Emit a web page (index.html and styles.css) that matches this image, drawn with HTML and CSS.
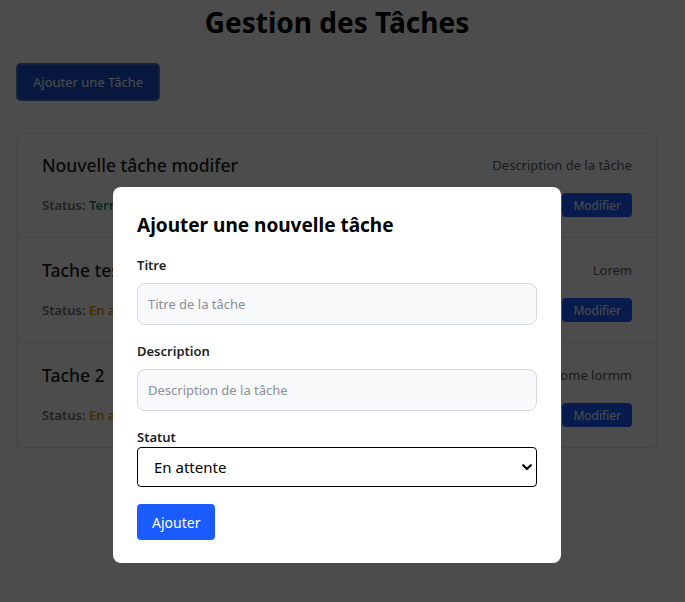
FILE: index.html
```html
<!DOCTYPE html>
<html lang="fr">
<head>
<meta charset="utf-8">
<title>Gestion des Tâches</title>
<link rel="stylesheet" href="styles.css">
</head>
<body>
<div class="page">
  <h1 class="page-title">Gestion des Tâches</h1>
  <button class="btn-add">Ajouter une Tâche</button>
  <ul class="task-list">
    <li class="task">
      <div class="task-row">
        <span class="task-title">Nouvelle tâche modifer</span>
        <span class="task-desc">Description de la tâche</span>
      </div>
      <div class="task-row task-row-bottom">
        <span class="task-status">Status: <span class="st-done">Terminé</span></span>
        <button class="btn-edit">Modifier</button>
      </div>
    </li>
    <li class="task">
      <div class="task-row">
        <span class="task-title">Tache test</span>
        <span class="task-desc">Lorem</span>
      </div>
      <div class="task-row task-row-bottom">
        <span class="task-status">Status: <span class="st-wait">En attente</span></span>
        <button class="btn-edit">Modifier</button>
      </div>
    </li>
    <li class="task">
      <div class="task-row">
        <span class="task-title">Tache 2</span>
        <span class="task-desc">lorem lorem lome lormm</span>
      </div>
      <div class="task-row task-row-bottom">
        <span class="task-status">Status: <span class="st-wait">En attente</span></span>
        <button class="btn-edit">Modifier</button>
      </div>
    </li>
  </ul>
</div>

<div class="overlay">
  <div class="modal">
    <h2 class="modal-title">Ajouter une nouvelle tâche</h2>
    <div class="field">
      <label class="label">Titre</label>
      <input class="input" type="text" placeholder="Titre de la tâche">
    </div>
    <div class="field">
      <label class="label">Description</label>
      <input class="input" type="text" placeholder="Description de la tâche">
    </div>
    <div class="field field-select">
      <label class="label">Statut</label>
      <div class="select-wrap">
        <select class="select">
          <option>En attente</option>
          <option>En cours</option>
          <option>Terminé</option>
        </select>
        <svg class="chev" width="10" height="7" viewBox="0 0 10 7"><path d="M1.2 1.2 L5 5 L8.8 1.2" fill="none" stroke="#000" stroke-width="2.2" stroke-linecap="round" stroke-linejoin="round"/></svg>
      </div>
    </div>
    <button class="btn-submit">Ajouter</button>
  </div>
</div>
</body>
</html>
```

FILE: styles.css
```css
* { box-sizing: border-box; }

html, body {
  margin: 0;
  padding: 0;
  background: #ffffff;
  font-family: "Noto Sans", "Open Sans", sans-serif;
  color: #212529;
}

.page {
  width: 674px;
  padding: 0 16px;
}

.page-title {
  margin: 5px 0 0;
  font-size: 28px;
  line-height: 34px;
  font-weight: 700;
  text-align: center;
  color: #000;
}

.btn-add {
  margin-top: 24px;
  height: 38px;
  padding: 0 15px;
  background: #1a4fd0;
  color: #ffffff;
  border: 2px solid #4a6fc4;
  border-radius: 5px;
  font-family: inherit;
  font-size: 13px;
}

.task-list {
  list-style: none;
  margin: 32px 1px 0;
  padding: 0;
  background: #fff;
  border: 1px solid #e3e6ea;
  border-radius: 6px;
  box-shadow: 0 1px 3px rgba(0,0,0,0.08);
}

.task {
  padding: 20px 24px 20px 24px;
  border-top: 1px solid #e3e6ea;
}
.task:first-child { border-top: none; padding-top: 19px; }

.task-row {
  display: flex;
  justify-content: space-between;
  align-items: center;
  height: 24px;
}
.task-row-bottom { margin-top: 16px; }

.task-title {
  font-size: 17.5px;
  font-weight: 500;
  color: #1d1f24;
}

.task-desc {
  font-size: 13px;
  color: #555c63;
}

.task-status {
  font-size: 13px;
  font-weight: 600;
  color: #6c757d;
}
.st-done { color: #198754; }
.st-wait { color: #d39e00; }

.btn-edit {
  height: 24px;
  padding: 0 11px;
  border: none;
  border-radius: 4px;
  background: #1a5cff;
  color: #fff;
  font-family: inherit;
  font-size: 12px;
}

.overlay {
  position: fixed;
  top: 0;
  left: 0;
  right: 0;
  bottom: 0;
  background: rgba(0, 0, 0, 0.7);
  display: flex;
  justify-content: flex-start;
  align-items: flex-start;
  padding: 187px 0 0 113px;
}

.modal {
  width: 448px;
  background: #fff;
  border-radius: 8px;
  padding: 26px 24px 23px;
}

.modal-title {
  margin: 0 0 18px;
  font-size: 19px;
  line-height: 24px;
  font-weight: 700;
  color: #000;
}

.field { margin-bottom: 16px; }

.label {
  display: block;
  font-size: 13px;
  line-height: 20px;
  font-weight: 600;
  color: #1d1f24;
  margin-bottom: 8px;
}

.input {
  display: block;
  width: 100%;
  height: 42px;
  padding: 0 10px;
  background: #f8f9fb;
  border: 1px solid #d5d9e0;
  border-radius: 8px;
  font-family: inherit;
  font-size: 13px;
  color: #212529;
  outline: none;
}
.input::placeholder { color: #8a9097; }

.field-select .label { margin-bottom: 0; }
.field-select { margin-bottom: 17px; }

.select-wrap { position: relative; }

.select {
  display: block;
  width: 100%;
  height: 40px;
  padding: 0 16px;
  appearance: none;
  -webkit-appearance: none;
  background: #fff;
  border: 1px solid #000;
  border-radius: 4px;
  font-family: inherit;
  font-size: 15px;
  color: #000;
}

.chev {
  position: absolute;
  right: 5px;
  top: 17px;
}

.btn-submit {
  height: 36px;
  padding: 0 15px;
  border: none;
  border-radius: 4px;
  background: #1a5cff;
  color: #fff;
  font-family: inherit;
  font-size: 14px;
}
```
